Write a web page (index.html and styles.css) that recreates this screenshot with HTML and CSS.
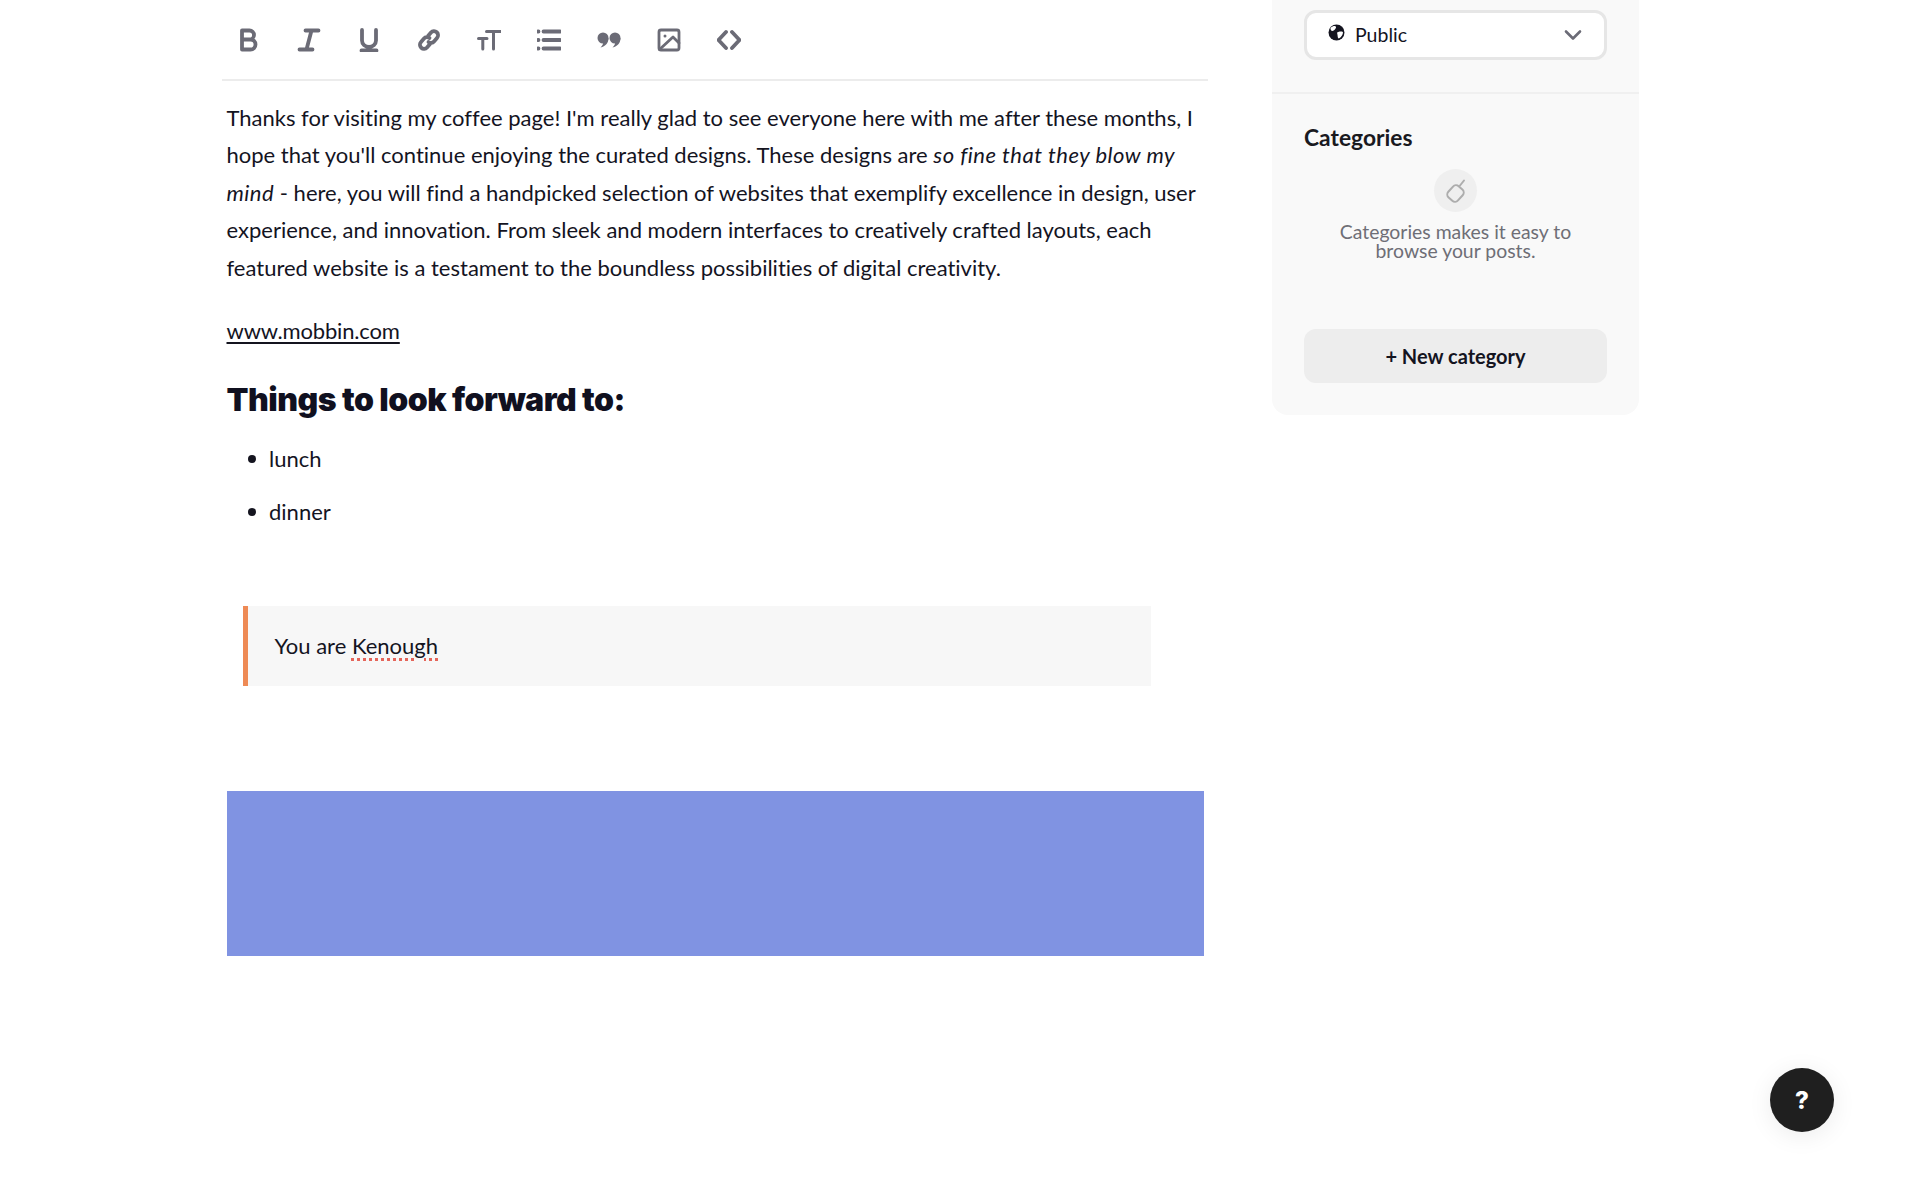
FILE: index.html
```html
<!DOCTYPE html>
<html lang="en">
<head>
<meta charset="utf-8">
<title>Editor</title>
<link rel="stylesheet" href="styles.css">
</head>
<body>
<div class="page">
  <main class="editor">
    <div class="toolbar">
      <svg class="tool" viewBox="0 0 24 24"><path d="M5 2.500h7.500a4.500 4.500 0 0 1 0 9H5zM5 11.500h8.500a5 5 0 0 1 0 10H5z"/></svg>
      <svg class="tool" viewBox="0 0 24 24"><path d="M8.500 2.500h13M2.500 21.500h13M14.500 2.500 9.500 21.500"/></svg>
      <svg class="tool" viewBox="0 0 24 24"><path d="M5 2v10.500a7 6.500 0 0 0 14 0V2M4.500 22.500h15"/></svg>
      <svg class="tool" viewBox="0 0 24 24"><path d="M11 8l3-3.500a4 4 0 0 1 6 5.500l-3 3.500a4 4 0 0 1-5.500.5M13 16l-3 3.500a4 4 0 0 1-6-5.500l3-3.500a4 4 0 0 1 5.500-.5"/></svg>
      <svg class="tool thin" viewBox="0 0 24 24"><path d="M9.500 3.500h14M16.500 3.500v17.500M1.500 10.500h8.500M5.800 10.500V21"/></svg>
      <svg class="tool" viewBox="0 0 24 24"><path d="M6.500 3.500h16.500M6.500 12h16.500M6.500 20.500h16.500M1 3.500h.5M1 12h.5M1 20.500h.5"/></svg>
      <svg class="tool solid" viewBox="0 0 24 24"><circle cx="6" cy="10" r="5.500"/><circle cx="18" cy="10" r="5.500"/><path d="M11.500 10c0 5-3 8.500-8 9.500 2-2 3-4 3-7zM23.500 10c0 5-3 8.500-8 9.500 2-2 3-4 3-7z"/></svg>
      <svg class="tool thinner" viewBox="0 0 24 24"><rect x="2" y="2" width="20" height="20" rx="2"/><path d="M2.500 21.500 16 9l6 6"/><circle cx="8" cy="8" r="1.500" class="dot"/></svg>
      <svg class="tool" viewBox="0 0 24 24"><path d="M9 4 1.500 12 9 20M15 4l7.500 8L15 20"/></svg>
    </div>
    <article class="content">
      <p class="para">Thanks for visiting my coffee page! I'm really glad to see everyone here with me after these months, I hope that you'll continue enjoying the curated designs. These designs are <em class="emphasis">so fine that they blow my mind</em> - here, you will find a handpicked selection of websites that exemplify excellence in design, user experience, and innovation. From sleek and modern interfaces to creatively crafted layouts, each featured website is a testament to the boundless possibilities of digital creativity.</p>
      <p class="link-line"><a class="link" href="#">www.mobbin.com</a></p>
      <h2 class="heading">Things to look forward to:</h2>
      <ul class="list">
        <li class="item">lunch</li>
        <li class="item">dinner</li>
      </ul>
      <blockquote class="quote">You are <span class="misspelled">Kenough</span></blockquote>
      <div class="media"></div>
    </article>
  </main>
  <aside class="sidebar">
    <section class="visibility">
      <div class="select">
        <svg class="globe" viewBox="0 0 16 16"><circle cx="8" cy="8" r="7.500" fill="#14141f"/><path d="M2.500 3.500C4 2 6 1.500 7 2s.5 1.500 0 2.500S5 6.500 4 6.500 1.800 4.800 2.500 3.500zM8.500 8c1.500-.8 4-1.500 5.500-.5.500 1.500-1.500 5-3.500 6-1 .5-1.500-1.500-1.500-3z" fill="#fff"/></svg>
        <span class="select-label">Public</span>
        <svg class="chevron" viewBox="0 0 18 12"><path d="M2 2.500l7 7 7-7"/></svg>
      </div>
    </section>
    <section class="categories">
      <h3 class="cat-title">Categories</h3>
      <div class="empty">
        <div class="tag-circle">
          <svg class="tag" viewBox="0 0 24 24"><rect x="5" y="7" width="13" height="15" rx="4" transform="rotate(42 11.500 14.500)"/><path d="M16 6.500 20 1.500"/></svg>
        </div>
        <p class="empty-text">Categories makes it easy to browse your posts.</p>
      </div>
      <button class="new-cat">+ New category</button>
    </section>
  </aside>
</div>
<button class="help">?</button>
</body>
</html>
```

FILE: styles.css
```css
* { box-sizing: border-box; }
html, body { margin: 0; padding: 0; height: 100%; background: #fff; overflow: hidden; }
body { font-family: "Lato", "Open Sans", sans-serif; font-variant-ligatures: none; color: #14141f; position: relative; }

.page { display: flex; align-items: flex-start; gap: 64px; padding-left: 222px; }

.editor { width: 986px; flex: none; }
.toolbar { display: flex; align-items: center; gap: 36px; height: 81px; padding: 1px 0 0 15px; border-bottom: 2px solid #ececec; }
.tool { width: 24px; height: 24px; fill: none; stroke: #6b6b76; stroke-width: 3.800; stroke-linecap: round; stroke-linejoin: round; flex: none; }
.tool.thin { stroke-width: 3; }
.tool.thinner { stroke-width: 2.800; }
.tool.solid { fill: #6b6b76; stroke: none; }
.tool .dot { fill: #6b6b76; stroke: none; }

.content { padding: 18px 4.500px 0; font-size: 22px; line-height: 37.400px; }
.para { margin: 0; }
.emphasis { letter-spacing: 0.5px; }
.link-line { margin: 26px 0 0; }
.link { color: inherit; text-decoration: underline; text-underline-offset: 3px; text-decoration-thickness: 1.500px; letter-spacing: -0.15px; }
.heading { margin: 31px 0 0; font-family: "Inter", sans-serif; font-weight: 900; font-size: 32px; line-height: 40px; letter-spacing: -0.5px; color: #10101f; }
.list { margin: 20px 0 0; padding: 0 0 0 21.500px; list-style: none; }
.item { display: flex; align-items: center; gap: 13px; margin-bottom: 15.600px; }
.item::before { content: ""; width: 8px; height: 8px; border-radius: 50%; background: #14141f; flex: none; }
.item:last-child { margin-bottom: 0; }
.quote { margin: 75px 0 0 16.500px; width: 908px; height: 80px; padding-left: 26.500px; line-height: 80px; background: #f7f7f7; border-left: 5px solid #ee8a55; }
.misspelled { text-decoration: underline dotted #e5655a 3px; text-underline-offset: 4px; }
.media { margin-top: 105px; height: 165px; background: #8093e2; }

.sidebar { width: 367px; flex: none; background: #f9f9f9; border-radius: 0 0 16px 16px; }
.visibility { padding: 10px 32px 32px; border-bottom: 2px solid #f0f0f0; }
.select { display: flex; align-items: center; height: 50px; padding: 0 22px 0 21px; background: #fff; border: 3px solid #e6e6e6; border-radius: 12px; }
.globe { width: 17px; height: 17px; margin: -5px 10px 0 0; flex: none; }
.select-label { flex: 1; font-size: 19.500px; margin-top: -2px; }
.chevron { width: 18px; height: 12px; fill: none; stroke: #6b6b76; stroke-width: 2.600; stroke-linecap: round; stroke-linejoin: round; }

.categories { padding: 28px 32px 32px; }
.cat-title { margin: 0; font-size: 22.800px; line-height: 30px; font-weight: 700; color: #1a1a1f; }
.empty { display: flex; flex-direction: column; align-items: center; margin-top: 17px; }
.tag-circle { width: 43px; height: 43px; border-radius: 50%; background: #efefef; display: flex; align-items: center; justify-content: center; }
.tag { width: 24px; height: 24px; fill: none; stroke: #adadad; stroke-width: 2; stroke-linecap: round; stroke-linejoin: round; }
.empty-text { margin: 10px 0 0; width: 260px; text-align: center; font-size: 19.400px; line-height: 19px; color: #6e6e76; }
.new-cat { display: block; width: 100%; height: 54px; margin-top: 69px; border: 0; border-radius: 12px; background: #ededed; font: 700 20px "Lato", sans-serif; color: #14141f; }

.help { position: absolute; left: 1770px; top: 1068px; width: 64px; height: 64px; border: 0; border-radius: 50%; background: #1f1f1f; color: #fff; font: 800 24px "Inter", sans-serif; box-shadow: 0 4px 24px rgba(0,0,0,0.08); }
```
